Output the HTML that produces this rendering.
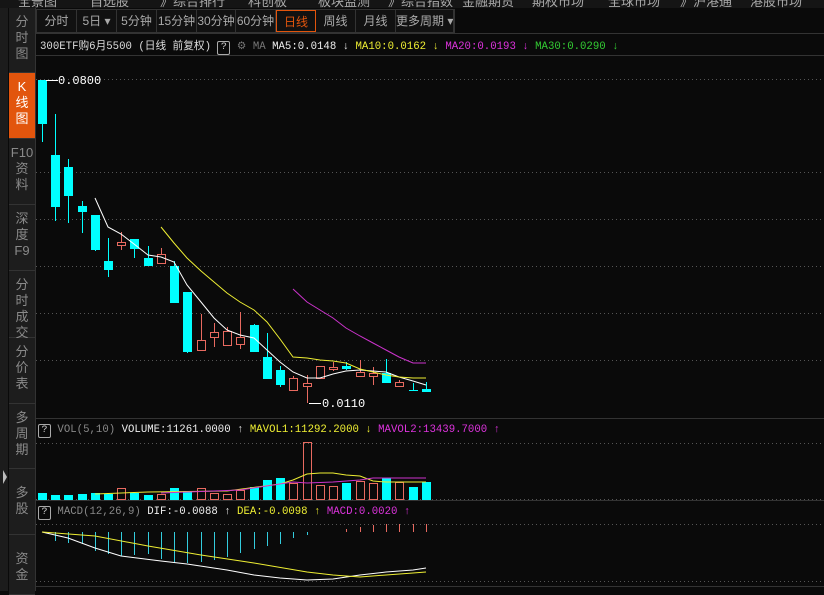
<!DOCTYPE html>
<html><head><meta charset="utf-8"><style>
*{margin:0;padding:0;box-sizing:border-box}
body{width:824px;height:591px;background:#0a0a0a;overflow:hidden;position:relative;font-family:"Liberation Sans","Noto Sans CJK SC",sans-serif}
.top{position:absolute;left:0;top:0;width:824px;height:8px;background:#151515;overflow:hidden}
.top span{position:absolute;top:-9px;color:#aaa;font-size:13px;white-space:nowrap}
.strip{position:absolute;left:0;top:8px;width:8px;height:583px;background:#1c1c1c}
.side{position:absolute;left:9px;width:26px;background:#1d1d1d;border-bottom:1px solid #333;color:#8a8a8a;font-size:13px;line-height:16px;text-align:center;padding-top:6px}
.side.on{background:#e2550d;color:#fff}
.tb{position:absolute;top:9px;left:36px;height:24px;display:flex;border:1px solid #333}
.tb div{height:22px;border-right:1px solid #333;color:#aaa;font-size:12px;line-height:22px;text-align:center;background:#111;white-space:nowrap;overflow:hidden}
.tb div.on{border:1px solid #e2550d;color:#e2550d}
.info{position:absolute;top:38px;left:40px;font-size:10.7px;white-space:nowrap;color:#ddd;font-family:"Liberation Mono","Noto Sans CJK SC",monospace}
.q{display:inline-block;border:1px solid #aaa;border-radius:2px;width:13px;height:14px;text-align:center;line-height:12px;color:#ccc;font-size:10px}
svg{position:absolute;left:0;top:0}
</style></head><body>
<div class="top"><span style="left:18px">全景图</span><span style="left:90px">自选股</span><span style="left:160px">》综合排行</span><span style="left:248px">科创板</span><span style="left:318px">板块监测</span><span style="left:388px">》综合指数</span><span style="left:462px">金融期货</span><span style="left:532px">期权市场</span><span style="left:608px">全球市场</span><span style="left:680px">》沪港通</span><span style="left:750px">港股市场</span></div>
<div class="strip"></div>
<svg width="824" height="591"><polygon points="3,470 7,477 3,484" fill="#bbb"/></svg>
<div class="side" style="top:8px;height:65px">分<br>时<br>图</div>
<div class="side on" style="top:73px;height:66px">K<br>线<br>图</div>
<div class="side" style="top:139px;height:66px">F10<br>资<br>料</div>
<div class="side" style="top:205px;height:66px">深<br>度<br>F9</div>
<div class="side" style="top:271px;height:67px">分<br>时<br>成<br>交</div>
<div class="side" style="top:338px;height:66px">分<br>价<br>表</div>
<div class="side" style="top:404px;height:65px">多<br>周<br>期</div>
<div class="side" style="top:469px;height:66px;padding-top:16px">多<br>股</div>
<div class="side" style="top:535px;height:60px;padding-top:16px">资<br>金</div>
<div style="position:absolute;left:35px;top:8px;width:1px;height:583px;background:#333"></div>
<div class="tb"><div style="width:40px">分时</div><div style="width:40px">5日 ▾</div><div style="width:40px">5分钟</div><div style="width:40px">15分钟</div><div style="width:39px">30分钟</div><div style="width:40px">60分钟</div><div class="on" style="width:40px">日线</div><div style="width:40px">周线</div><div style="width:40px">月线</div><div style="width:58px">更多周期 ▾</div></div>
<div style="position:absolute;left:36px;top:33px;width:788px;height:1px;background:#333"></div>
<div style="position:absolute;left:36px;top:55px;width:788px;height:1px;background:#333"></div>
<div class="info">300ETF购6月5500 (日线 前复权) <span class="q">?</span> <span style="color:#777">⚙ MA</span> <span style="color:#eee">MA5:0.0148 ↓</span> <span style="color:#ee3">MA10:0.0162 ↓</span> <span style="color:#d3d">MA20:0.0193 ↓</span> <span style="color:#3c3">MA30:0.0290 ↓</span></div>
<div class="info" style="top:424px;left:38px"><span class="q">?</span> <span style="color:#888">VOL(5,10)</span> <span style="color:#eee">VOLUME:11261.0000 ↑</span> <span style="color:#ee3">MAVOL1:11292.2000 ↓</span> <span style="color:#d3d">MAVOL2:13439.7000 ↑</span></div>
<div class="info" style="top:506px;left:38px"><span class="q">?</span> <span style="color:#888">MACD(12,26,9)</span> <span style="color:#eee">DIF:-0.0088 ↑</span> <span style="color:#ee3">DEA:-0.0098 ↑</span> <span style="color:#d3d">MACD:0.0020 ↑</span></div>
<svg width="824" height="591" id="c"></svg>
<script>
var s='';
function L(x1,y1,x2,y2,c,d){s+='<line x1="'+x1+'" y1="'+y1+'" x2="'+x2+'" y2="'+y2+'" stroke="'+c+'" stroke-width="1"'+(d?' stroke-dasharray="1,3"':'')+'/>';}
[79,172,219,266,313,360,443,499,524,581].forEach(function(y){L(36,y+.5,824,y+.5,'#555',1)});
L(36,418.5,824,418.5,'#333');L(36,500.5,824,500.5,'#333');L(36,586.5,824,586.5,'#333');
var X=[42,55,68,82,95,108,121,134,148,161,174,187,201,214,227,240,254,267,280,293,307,320,333,346,360,373,386,399,413,426];
var C=[[80,124,80,142,0],[155,207,114,221,0],[167,196,159,223,0],[206,212,201,233,0],[215,250,215,251,0],[261,270,238,277,0],[242,245,232,250,1],[239,249,239,258,0],[258,266,246,266,0],[254,263,248,263,1],[266,303,261,303,0],[292,352,292,353,0],[340,350,314,350,1],[332,337,323,347,1],[331,345,327,345,1],[337,344,312,349,1],[325,352,324,352,0],[357,379,333,379,0],[370,385,366,387,0],[378,390,376,390,1],[383,386,375,403,1],[366,378,366,378,1],[367,369,362,371,1],[366,369,362,370,0],[372,376,360,377,1],[373,376,367,385,1],[373,383,359,383,0],[382,386,380,386,1],[390,391,383,391,0],[389,392,382,392,0]];
C.forEach(function(c,i){var x=X[i];var col=c[4]?'#e86a60':'#00ffff';L(x+.5,c[2],x+.5,c[3],col);
if(c[4])s+='<rect x="'+(x-3.5)+'" y="'+(c[0]+.5)+'" width="8" height="'+Math.max(c[1]-c[0],1)+'" fill="#0a0a0a" stroke="'+col+'"/>';
else s+='<rect x="'+(x-4)+'" y="'+c[0]+'" width="9" height="'+Math.max(c[1]-c[0],1)+'" fill="'+col+'"/>';});
function P(pts,c){s+='<polyline fill="none" stroke="'+c+'" stroke-width="1" points="'+pts+'"/>';}
P('95,198 108,227 121,234 134,244 148,255 161,257 174,262 187,285 201,302 214,318 227,330 240,335 254,338 267,350 280,362 293,372 307,378 320,378 333,374 346,371 360,370 373,371 386,372 399,377 413,381 426,385','#fff');
P('161,227 174,243 187,258 201,271 214,282 227,293 240,302 254,310 267,322 280,339 293,357 307,358 320,360 333,361 346,363 360,369 373,372 386,375 399,377 413,378 426,378','#ee3');
P('293,289 307,302 320,310 333,318 346,328 360,336 373,343 386,350 399,357 413,363 426,363','#c3c');
s+='<text x="58" y="84" fill="#fff" font-size="12" font-family="Liberation Mono">0.0800</text>';L(46,80.5,58,80.5,'#fff');
s+='<text x="322" y="407" fill="#fff" font-size="12" font-family="Liberation Mono">0.0110</text>';L(309,403.5,321,403.5,'#fff');
var V=[493,495,495,494,493,494,488,493,495,494,488,491,488,493,494,490,487,480,478,483,442,485,486,483,481,483,478,482,487,482];
V.forEach(function(t,i){var x=X[i];if(C[i][4])s+='<rect x="'+(x-3.5)+'" y="'+(t+.5)+'" width="8" height="'+(499-t)+'" fill="none" stroke="#e86a60"/>';else s+='<rect x="'+(x-4)+'" y="'+t+'" width="9" height="'+(500-t)+'" fill="#00ffff"/>';});
P('95,494 148,492 227,491 280,484 293,480 307,474 320,473 333,473 346,475 360,476 373,481 386,482 413,482 426,482','#ee3');
P('161,493 240,490 293,482 307,483 333,482 360,480 373,478 386,478 426,478','#c3c');
var M=[0,541,543,544,551,554,556,555,554,559,563,563,562,560,557,553,549,546,544,538,535,0,0,529,527,525,524,524,524,524];
M.forEach(function(b,i){if(!b)return;var x=X[i]+.5;if(b>532)L(x,532,x,b,'#3cd');else L(x,b,x,532,'#e86a60');});
P('42,532 68,538 95,548 121,556 161,561 187,564 227,570 254,575 280,578 307,580 333,579 360,575 386,572 413,570 426,568','#fff');
P('42,532 95,536 148,546 201,555 254,563 307,572 333,575 360,577 386,575 413,573 426,572','#ee3');
document.getElementById('c').innerHTML=s;
</script>
</body></html>
